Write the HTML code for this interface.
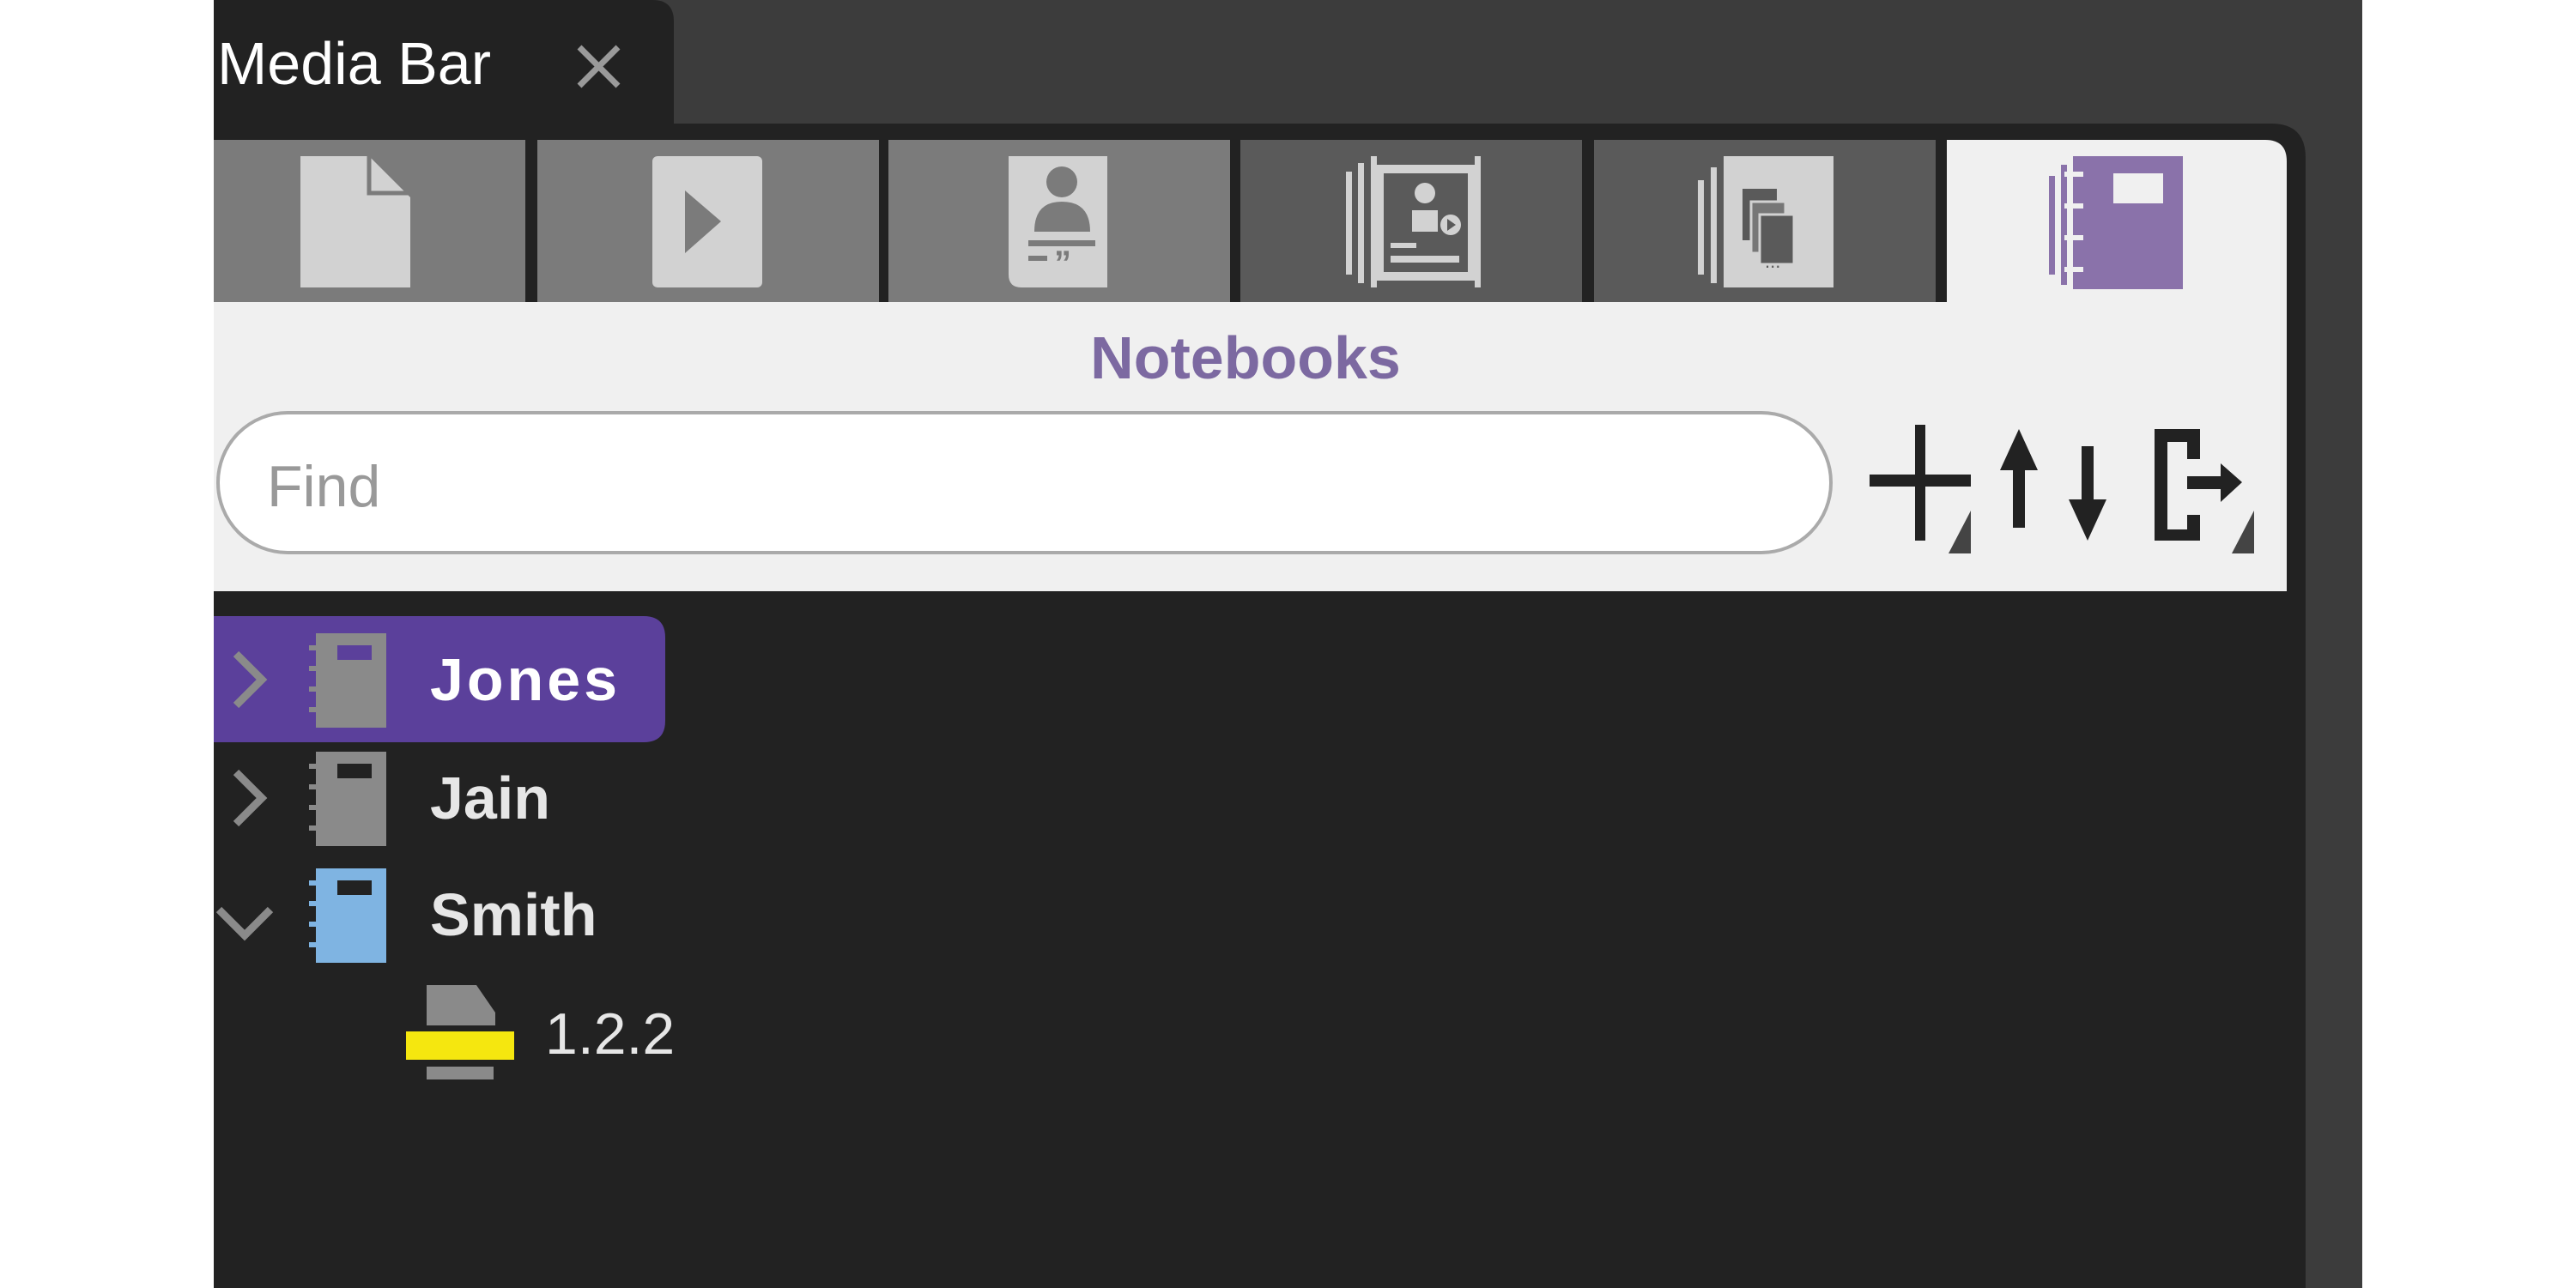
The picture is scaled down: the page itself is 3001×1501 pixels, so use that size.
<!DOCTYPE html>
<html><head><meta charset="utf-8"><style>
html,body{margin:0;padding:0;width:3001px;height:1501px;overflow:hidden;background:#fff}
svg{position:absolute;left:0;top:0}
</style></head><body>
<svg width="3001" height="1501" viewBox="0 0 3001 1501" font-family="Liberation Sans, sans-serif">
<rect x="249" y="0" width="2503" height="1501" fill="#3c3c3c"/>
<path d="M249 0 H760 Q785 0 785 25 V144 H249 Z" fill="#222"/>
<text x="253" y="98" font-size="70" fill="#fff">Media Bar</text>
<path d="M675 55 L720 100 M720 55 L675 100" stroke="#9a9a9a" stroke-width="7"/>
<path d="M249 144 H2646 Q2686 144 2686 184 V1501 H249 Z" fill="#222"/>
<path d="M249 352 H2664 V689 H249 Z" fill="#f0f0f0"/>
<rect x="249" y="163" width="363" height="189" fill="#7b7b7b"/>
<rect x="626" y="163" width="398" height="189" fill="#7b7b7b"/>
<rect x="1035" y="163" width="398" height="189" fill="#7b7b7b"/>
<rect x="1445" y="163" width="398" height="189" fill="#5a5a5a"/>
<rect x="1857" y="163" width="398" height="189" fill="#5a5a5a"/>
<path d="M2268 163 H2639 Q2664 163 2664 188 V352 H2268 Z" fill="#f0f0f0"/>
<path d="M350 182 H430 L478 230 V335 H350 Z" fill="#d2d2d2"/>
<path d="M430 182 V225 H478" fill="none" stroke="#7b7b7b" stroke-width="5"/>
<rect x="760" y="182" width="128" height="153" rx="6" fill="#d2d2d2"/>
<path d="M798 222 L840 258 L798 295 Z" fill="#7b7b7b"/>
<path d="M1175 182 H1290 V335 H1190 Q1175 335 1175 320 Z" fill="#d2d2d2"/>
<circle cx="1237" cy="212" r="18" fill="#7b7b7b"/>
<path d="M1205 270 Q1205 235 1237 235 Q1270 235 1270 270 Z" fill="#7b7b7b"/>
<rect x="1198" y="280" width="78" height="7" fill="#7b7b7b"/>
<rect x="1198" y="298" width="22" height="6" fill="#7b7b7b"/>
<text x="1228" y="320" font-size="40" fill="#7b7b7b" font-weight="bold">”</text>
<rect x="1568" y="200" width="7" height="120" fill="#d2d2d2"/>
<rect x="1582" y="190" width="7" height="140" fill="#d2d2d2"/>
<rect x="1597" y="182" width="7" height="153" fill="#d2d2d2"/>
<rect x="1718" y="182" width="7" height="153" fill="#d2d2d2"/>
<rect x="1604" y="192" width="114" height="135" fill="#d2d2d2"/>
<rect x="1612" y="202" width="98" height="115" fill="#5a5a5a"/>
<circle cx="1660" cy="225" r="12" fill="#d2d2d2"/>
<path d="M1645 270 V245 H1675 V270 Z" fill="#d2d2d2"/>
<circle cx="1690" cy="262" r="12" fill="#d2d2d2"/><path d="M1686 255 L1696 262 L1686 269Z" fill="#5a5a5a"/>
<rect x="1620" y="283" width="30" height="6" fill="#d2d2d2"/><rect x="1620" y="298" width="80" height="8" fill="#d2d2d2"/>
<rect x="1978" y="210" width="7" height="110" fill="#d2d2d2"/>
<rect x="1993" y="195" width="7" height="135" fill="#d2d2d2"/>
<rect x="2008" y="182" width="128" height="153" fill="#d2d2d2"/>
<rect x="2030" y="220" width="40" height="60" fill="#5a5a5a"/>
<rect x="2040" y="235" width="40" height="60" fill="#777" stroke="#d2d2d2" stroke-width="3"/>
<rect x="2050" y="250" width="40" height="58" fill="#5a5a5a" stroke="#d2d2d2" stroke-width="3"/>
<text x="2056" y="312" font-size="22" fill="#5a5a5a">...</text>
<rect x="2387" y="205" width="7" height="115" fill="#8a72aa"/>
<rect x="2401" y="192" width="7" height="140" fill="#8a72aa"/>
<rect x="2415" y="182" width="128" height="155" fill="#8a72aa"/>
<rect x="2462" y="202" width="58" height="35" fill="#f0f0f0"/>
<g fill="#f0f0f0"><rect x="2405" y="200" width="22" height="6"/><rect x="2405" y="237" width="22" height="6"/><rect x="2405" y="274" width="22" height="6"/><rect x="2405" y="311" width="22" height="6"/></g>
<text x="1451" y="441" font-size="70" font-weight="bold" fill="#7c69a1" text-anchor="middle">Notebooks</text>
<rect x="254" y="481" width="1879" height="163" rx="81" fill="#fff" stroke="#aaa" stroke-width="4"/>
<text x="311" y="590" font-size="68" fill="#999">Find</text>
<rect x="2231" y="495" width="12" height="135" fill="#222"/>
<rect x="2178" y="553" width="118" height="14" fill="#222"/>
<path d="M2270 645 L2296 595 V645 Z" fill="#444"/>
<path d="M2352 500 L2330 548 H2345 V615 H2359 V548 H2374 Z" fill="#222"/>
<path d="M2432 630 L2410 582 H2425 V520 H2439 V582 H2454 Z" fill="#222"/>
<path d="M2510 500 H2563 V535 H2548 V515 H2525 V617 H2548 V600 H2563 V630 H2510 Z" fill="#222"/>
<path d="M2548 555 H2587 V540 L2612 562 L2587 585 V570 H2548 Z" fill="#222"/>
<path d="M2600 645 L2626 595 V645 Z" fill="#444"/>
<path d="M249 718 H750 Q775 718 775 743 V840 Q775 865 750 865 H249 Z" fill="#5b409b"/>
<path d="M275 762 L305 792 L275 822" fill="none" stroke="#8a8a8a" stroke-width="9"/>
<rect x="368" y="738" width="82" height="110" fill="#8a8a8a"/>
<rect x="393" y="752" width="40" height="17" fill="#5b409b"/>
<g fill="#8a8a8a"><rect x="360" y="752" width="16" height="6"/><rect x="360" y="776" width="16" height="6"/><rect x="360" y="800" width="16" height="6"/><rect x="360" y="824" width="16" height="6"/></g>
<text x="501" y="816" font-size="70" font-weight="bold" fill="#fff" textLength="218">Jones</text>
<path d="M275 900 L305 930 L275 960" fill="none" stroke="#8a8a8a" stroke-width="9"/>
<rect x="368" y="876" width="82" height="110" fill="#8a8a8a"/>
<rect x="393" y="890" width="40" height="17" fill="#222"/>
<g fill="#8a8a8a"><rect x="360" y="890" width="16" height="6"/><rect x="360" y="914" width="16" height="6"/><rect x="360" y="938" width="16" height="6"/><rect x="360" y="962" width="16" height="6"/></g>
<text x="501" y="954" font-size="70" font-weight="bold" fill="#e6e6e6">Jain</text>
<path d="M255 1060 L285 1090 L315 1060" fill="none" stroke="#8a8a8a" stroke-width="9"/>
<rect x="368" y="1012" width="82" height="110" fill="#7fb4e2"/>
<rect x="393" y="1026" width="40" height="17" fill="#222"/>
<g fill="#7fb4e2"><rect x="360" y="1026" width="16" height="6"/><rect x="360" y="1050" width="16" height="6"/><rect x="360" y="1074" width="16" height="6"/><rect x="360" y="1098" width="16" height="6"/></g>
<text x="501" y="1090" font-size="70" font-weight="bold" fill="#e6e6e6">Smith</text>
<path d="M497 1148 H555 L577 1180 V1195 H497 Z" fill="#8a8a8a"/>
<rect x="473" y="1202" width="126" height="33" fill="#f5e70f"/>
<rect x="497" y="1243" width="78" height="15" fill="#8a8a8a"/>
<text x="635" y="1228" font-size="68" fill="#e6e6e6">1.2.2</text>
</svg>
</body></html>
